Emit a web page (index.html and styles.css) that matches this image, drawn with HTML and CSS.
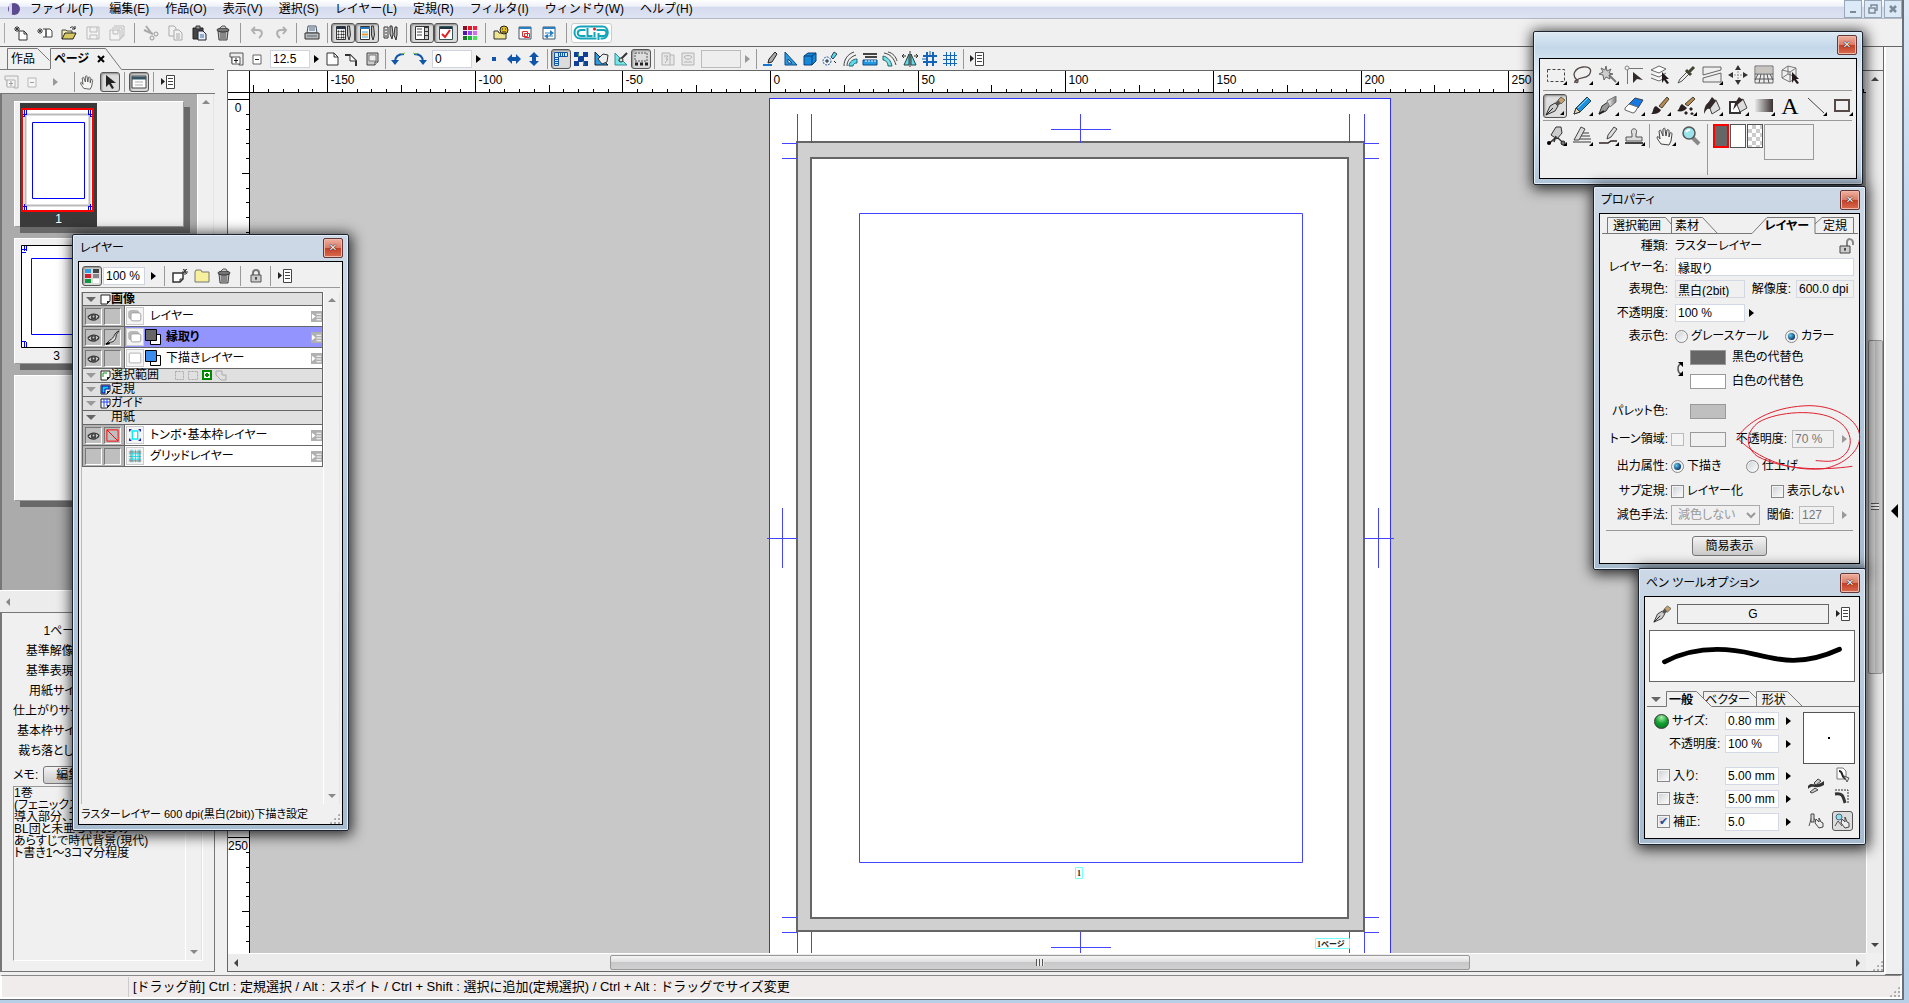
FILE: index.html
```html
<!DOCTYPE html>
<html lang="ja">
<head>
<meta charset="utf-8">
<title>ページ</title>
<link rel="stylesheet" href="styles.css">
</head>
<body>
<svg class="defs" aria-hidden="true">
<defs>
<linearGradient id="gm" x1="0" x2="1"><stop offset="0" stop-color="#fff"/><stop offset="1" stop-color="#777"/></linearGradient>
<linearGradient id="gd" x1="0" x2="1"><stop offset="0" stop-color="#e8e8e8"/><stop offset="1" stop-color="#3a3030"/></linearGradient>
<symbol id="new" viewBox="0 0 16 16"><path d="M6 6h5l3 3v6H6z" fill="#fff" stroke="#333"/><path d="M11 6v3h3M2 2l4 4M4 1v6M1 4h6M6 2L2 6" stroke="#333" fill="none"/></symbol>
<symbol id="newp" viewBox="0 0 16 16"><path d="M6 4h3v8H6M9 4h4l2 2v6H9z" fill="#fff" stroke="#444"/><path d="M1 4l4 4M3 3v6M0 6h6M5 4L1 8" stroke="#444" fill="none"/></symbol>
<symbol id="open" viewBox="0 0 16 16"><path d="M1 14V5h4l1 1h5v3" fill="#f4efb0" stroke="#444"/><path d="M1 14l3-6h11l-3 6z" fill="#d8c860" stroke="#222"/><path d="M9 3c2-2 4-1 5 1M14 1v3h-3" stroke="#222" fill="none"/></symbol>
<symbol id="save" viewBox="0 0 16 16"><path d="M2 2h12v12H2zM5 2v5h7V2M5 14v-4h7v4" fill="#f4f4f4" stroke="#bbb"/></symbol>
<symbol id="saves" viewBox="0 0 16 16"><path d="M5 1h10v10h-2M3 3h10v10h-2M1 5h10v10H1zM4 5v4h5V5" fill="#f4f4f4" stroke="#bbb"/></symbol>
<symbol id="cut" viewBox="0 0 16 16"><path d="M3 1l6 8M1 5l9 4" stroke="#aaa" stroke-width="2"/><circle cx="9" cy="13" r="2" fill="none" stroke="#999"/><circle cx="13" cy="9" r="2" fill="none" stroke="#999"/></symbol>
<symbol id="copy" viewBox="0 0 16 16"><path d="M2 1h5l2 2v8H2z" fill="#f2f2f2" stroke="#aaa"/><path d="M7 5h5l3 3v7H7zM9 9h4M9 11h4M9 13h4" fill="#f2f2f2" stroke="#aaa"/></symbol>
<symbol id="paste" viewBox="0 0 16 16"><path d="M2 3h10v11H2z" fill="#444" stroke="#222"/><path d="M5 1h4v3H5z" fill="#999" stroke="#333"/><path d="M7 6h5l3 3v6H7z" fill="#e8eef6" stroke="#223"/><path d="M9 10h4M9 12h4" stroke="#3c6fa8"/></symbol>
<symbol id="trash" viewBox="0 0 16 16"><path d="M3 6h10l-1 9H4z" fill="#bbb" stroke="#444"/><path d="M6 7v7M8 7v7M10 7v7" stroke="#555"/><ellipse cx="8" cy="5" rx="6" ry="2" fill="#777" stroke="#333"/><path d="M5 3l2-2h3l1 2" fill="#ccc" stroke="#555"/></symbol>
<symbol id="undo" viewBox="0 0 16 16"><path d="M3 5h6c5 0 5 5 1 8M6 2L3 5l3 4" fill="none" stroke="#b0b0b0" stroke-width="2"/></symbol>
<symbol id="redo" viewBox="0 0 16 16"><path d="M13 5H8c-5 0-5 5-1 8M10 2l3 3-3 4" fill="none" stroke="#b0b0b0" stroke-width="2"/></symbol>
<symbol id="print" viewBox="0 0 16 16"><path d="M4 1h8l1 7H3z" fill="#e8f0f8" stroke="#456"/><path d="M1 8h14v6H1z" fill="#bbb" stroke="#333"/><path d="M5 3h6M5 5h6M3 11h10" stroke="#567"/></symbol>
<symbol id="pal" viewBox="0 0 16 16"><path d="M1.500 1.500h9v13h-9z" fill="#eee" stroke="#333"/><path d="M1 3h10" stroke="#234" stroke-width="2"/><path d="M3 6h1v1H3zM6 6h1v1H6zM8 6h1v1H8zM3 9h1v1H3zM6 9h1v1H6zM8 9h1v1H8zM3 12h1v1H3zM6 12h1v1H6zM8 12h1v1H8z" stroke="#333"/><path d="M12.500 1v9l1.500 5 1.500-5-1-9z" fill="#bbb" stroke="#333"/></symbol>
<symbol id="pal2" viewBox="0 0 16 16"><path d="M1.500 1.500h9v13h-9z" fill="#fff" stroke="#333"/><path d="M1 3h10" stroke="#2874b8" stroke-width="2"/><path d="M3 7h6M3 12h6" stroke="#49a4dc"/><path d="M3 9.500h6" stroke="#e49a2c" stroke-width="2"/><path d="M12.500 1v9l1.500 5 1.500-5-1-9z" fill="#bbb" stroke="#333"/></symbol>
<symbol id="brushes" viewBox="0 0 16 16"><path d="M1 2h4v11H1z" fill="#eee" stroke="#333"/><path d="M2 5h2M2 8h2M2 11h2" stroke="#333"/><path d="M7 1h2l1 8-1 5-2-5zM12 2h2v8l-1 5-2-5z" fill="#bbb" stroke="#333"/></symbol>
<symbol id="film" viewBox="0 0 16 16"><path d="M1.500 1.500h9v13h-9z" fill="#fff" stroke="#333"/><path d="M10 1h5v14h-5z" fill="#333"/><path d="M3 4h5M3 7h5M3 10h5" stroke="#444"/><path d="M11 3h3v3h-3zM11 7h3v3h-3zM11 11h3v3h-3z" fill="#ccc"/></symbol>
<symbol id="check" viewBox="0 0 16 16"><path d="M1.500 1.500h13v13h-13z" fill="#fff" stroke="#355"/><path d="M2 3h12" stroke="#234" stroke-width="2"/><path d="M4 9l3 3 5-7" fill="none" stroke="#e02020" stroke-width="2"/></symbol>
<symbol id="colors" viewBox="0 0 16 16"><path d="M1 1h4v4H1z" fill="#900c20"/><path d="M6 1h4v4H6z" fill="#e01828"/><path d="M11 1h4v4h-4z" fill="#f02040"/><path d="M1 6h4v4H1z" fill="#5018b0"/><path d="M6 6h4v4H6z" fill="#9848e0"/><path d="M11 6h4v4h-4z" fill="#d070f0"/><path d="M1 11h4v4H1z" fill="#187828"/><path d="M6 11h4v4H6z" fill="#18b838"/><path d="M11 11h4v4h-4z" fill="#50e060"/></symbol>
<symbol id="mat" viewBox="0 0 16 16"><path d="M1 14V6h4l1 2h7v6z" fill="#efe490" stroke="#333"/><circle cx="11" cy="5" r="4" fill="#e6c020" stroke="#222"/><path d="M9 4h1M12 4h1M9 7h4" stroke="#222"/></symbol>
<symbol id="winr" viewBox="0 0 16 16"><path d="M2 2h12v12H2z" fill="#fff" stroke="#456"/><path d="M2 3h12" stroke="#2880c0" stroke-width="2"/><path d="M5.500 6.500h5v5h-5zM7.500 8.500h5v4h-5z" fill="#fff" stroke="#d83030"/></symbol>
<symbol id="winb" viewBox="0 0 16 16"><path d="M2 2h12v12H2z" fill="#fff" stroke="#456"/><path d="M2 3h12" stroke="#2880c0" stroke-width="2"/><path d="M4 8h6M6 11h6" stroke="#2880c0"/><path d="M9 5l4 3-4 3zM7 9l-4 2 4 3z" fill="#2880c0"/></symbol>
<symbol id="plus" viewBox="0 0 16 16"><path d="M1 2h13v12h-4v-2H3V6H1z" fill="#eee" stroke="#555"/><path d="M3 6h8v7H3z" fill="#fff" stroke="#555"/><path d="M5 9.500h4M7 7v5" stroke="#222"/></symbol>
<symbol id="minus" viewBox="0 0 16 16"><path d="M4 4h8v9H4z" fill="#fff" stroke="#666"/><path d="M6 8.500h4" stroke="#222"/></symbol>
<symbol id="page" viewBox="0 0 16 16"><path d="M3 2h7l4 4v8H3z" fill="#fff" stroke="#333"/><path d="M10 2v4h4" fill="none" stroke="#333"/></symbol>
<symbol id="corner" viewBox="0 0 16 16"><path d="M1 4h5l6 6v5" fill="none" stroke="#333" stroke-width="2"/><path d="M6 4v6h6" fill="#fff" stroke="#333"/></symbol>
<symbol id="roll" viewBox="0 0 16 16"><path d="M3 2h11v9l-3 3H3z" fill="#ccc" stroke="#444"/><path d="M5 4h7v6H5z" fill="#eee" stroke="#777"/><path d="M14 11h-3v3" fill="#fff" stroke="#444"/></symbol>
<symbol id="rotl" viewBox="0 0 16 16"><path d="M13 3C7 3 4 6 4 11" fill="none" stroke="#0f55a8" stroke-width="2"/><path d="M0 9h8l-4 5z" fill="#0f55a8"/><path d="M14 2l-4 1" stroke="#7fd040"/></symbol>
<symbol id="rotr" viewBox="0 0 16 16"><path d="M3 3c6 0 9 3 9 8" fill="none" stroke="#0f55a8" stroke-width="2"/><path d="M16 9H8l4 5z" fill="#0f55a8"/><path d="M2 2l4 1" stroke="#7fd040"/></symbol>
<symbol id="dot" viewBox="0 0 16 16"><path d="M6 6h4v4H6z" fill="#0f55a8"/></symbol>
<symbol id="fliph" viewBox="0 0 16 16"><path d="M1 8l5-5v3h4V3l5 5-5 5v-3H6v3z" fill="#0f55a8"/></symbol>
<symbol id="flipv" viewBox="0 0 16 16"><path d="M8 1l5 5h-3v4h3l-5 5-5-5h3V6H3z" fill="#0f55a8"/></symbol>
<symbol id="rul" viewBox="0 0 16 16"><path d="M1.500 1.500h13v4h-9v9h-4z" fill="#d4e8f8" stroke="#0f55a8"/><path d="M5.500 1v4M7.500 1v4M9.500 1v4M11.500 1v4M1 6.500h4M1 8.500h4M1 10.500h4M1 12.500h4" stroke="#0f55a8"/></symbol>
<symbol id="chk" viewBox="0 0 16 16"><path d="M1 1h5v5H1zM10 1h5v5h-5zM5 5h6v6H5zM1 10h5v5H1zM10 10h5v5h-5z" fill="#0f3f98"/><path d="M5 2l1 4M10 10l1 4" stroke="#55b848"/></symbol>
<symbol id="trih" viewBox="0 0 16 16"><path d="M2 1v13h13z" fill="#2f9be0" stroke="#123"/><path d="M5 8l5-5 5 1-1 7-5 2z" fill="#eee" stroke="#333"/></symbol>
<symbol id="trip" viewBox="0 0 16 16"><path d="M2 2v12h12z" fill="#70e8e8" stroke="#489"/><path d="M6 10l8-8" stroke="#333" stroke-width="2"/><circle cx="8" cy="9" r="2" fill="#ddd" stroke="#333"/></symbol>
<symbol id="seld" viewBox="0 0 16 16"><path d="M2 2h12v8H2z" fill="#ddd" stroke="#555" stroke-dasharray="2 1"/><path d="M2 13h3M7 13h3M12 13h3" stroke="#222" stroke-width="3"/></symbol>
<symbol id="g1" viewBox="0 0 16 16"><path d="M2 2h8v12H2zM10 4h4v10h-4M4 5h4l-2 3h2l-3 4" fill="#e8e8e8" stroke="#b4b4b4"/></symbol>
<symbol id="g2" viewBox="0 0 16 16"><path d="M2 2h12v12H2zM4 6c2-2 6-2 8 0-2 3-6 3-8 0M4 11h8" fill="#e8e8e8" stroke="#b4b4b4"/></symbol>
<symbol id="penr" viewBox="0 0 16 16"><path d="M1 14h9" stroke="#1278d0" stroke-width="2"/><path d="M6 12l1-4 6-7 2 2-5 8z" fill="#aaa" stroke="#222"/></symbol>
<symbol id="tri" viewBox="0 0 16 16"><path d="M3 1v13h12zM6 8v4h4z" fill="#2f9be0" stroke="#0a4a88" fill-rule="evenodd"/></symbol>
<symbol id="cube" viewBox="0 0 16 16"><path d="M2 5l4-3h8v8l-4 4H2z" fill="#1688d8" stroke="#0a3f78"/><path d="M2 5h8v9M10 5l4-3" fill="none" stroke="#0a3f78"/></symbol>
<symbol id="spec" viewBox="0 0 16 16"><circle cx="5" cy="10" r="4" fill="#e8f4fa" stroke="#2a5a90" stroke-dasharray="2 1"/><path d="M3 10h4M5 8v4" stroke="#222"/><path d="M9 6l3-5 3 2-4 5z" fill="#52d8e8" stroke="#345"/><path d="M12 10l2 2" stroke="#222"/></symbol>
<symbol id="curv" viewBox="0 0 16 16"><path d="M2 15C2 8 6 3 12 1M5 15c0-5 3-9 9-11" fill="none" stroke="#444"/><path d="M7 15c0-4 4-7 8-7v4c-2 0-4 1-4 3z" fill="#5cd8e8" stroke="#267"/></symbol>
<symbol id="para" viewBox="0 0 16 16"><path d="M1 3h14M3 6h12" stroke="#444" stroke-width="2"/><path d="M1 9h14v5H1z" fill="#2498e0" stroke="#0a4a88"/><path d="M4 9v2M7 9v2M10 9v2M13 9v2" stroke="#fff"/></symbol>
<symbol id="conc" viewBox="0 0 16 16"><path d="M2 2c6 1 10 5 12 12M6 1c5 1 8 5 9 9" fill="none" stroke="#444"/><path d="M1 5c5 1 8 5 9 10H6C6 12 4 9 1 9z" fill="#7ce0ec" stroke="#266"/></symbol>
<symbol id="sym" viewBox="0 0 16 16"><path d="M7 3v11H2zM9 3v11h5z" fill="#68d8e8" stroke="#244"/><path d="M8 0v16M0 5h4M12 5h4M2 3L0 5l2 2M14 3l2 2-2 2" stroke="#333" fill="none"/></symbol>
<symbol id="guide" viewBox="0 0 16 16"><path d="M1 5h14M1 11h14M5 1v14M11 1v14" stroke="#1464b8" stroke-width="2"/><path d="M0 8h5M8 0v5" stroke="#1464b8"/></symbol>
<symbol id="grid" viewBox="0 0 16 16"><path d="M1 4.500h14M1 8.500h14M1 12.500h14M4.500 1v14M8.500 1v14M12.500 1v14" stroke="#1464b8"/></symbol>
<symbol id="menu" viewBox="0 0 16 16"><path d="M1 4v7l4-3.500z" fill="#222"/><path d="M6.500 1.500h8v13h-8z" fill="#fff" stroke="#444"/><path d="M8 4.500h5M8 7.500h5M8 10.500h5" stroke="#444"/></symbol>
<symbol id="hand" viewBox="0 0 20 20"><path d="M6 18c-2-3-4-5-4-7 1-1 2 0 3 2L4 5c1-1 2-1 2 0l2 5V3c1-1 2-1 2 0l1 7 1-6c1-1 2 0 2 1v6l1-4c1-1 2 0 2 1l-1 7-2 4z" fill="#f6f6f4" stroke="#444"/></symbol>
<symbol id="cur" viewBox="0 0 16 16"><path d="M4 1v12l3-3 3 5 2-1-3-5h5z" fill="#222"/></symbol>
<symbol id="win" viewBox="0 0 16 16"><path d="M1 2h14v12H1z" fill="#fff" stroke="#444"/><path d="M1 4h14" stroke="#356" stroke-width="3"/><path d="M4 8h8M4 11h8" stroke="#aaa"/></symbol>
<symbol id="clr" viewBox="0 0 16 16"><path d="M1 1h6v4H1z" fill="#30a0e0"/><path d="M9 1h6v4H9z" fill="#444"/><path d="M1 6h6v4H1z" fill="#d02030"/><path d="M9 6h6v4H9z" fill="#888"/><path d="M1 11h6v4H1z" fill="#109840"/><path d="M9 11h6v4H9z" fill="#fff"/></symbol>
<symbol id="nlay" viewBox="0 0 16 16"><path d="M1 5h10v6l-3 3H1z" fill="#fff" stroke="#333" stroke-width="1.500"/><path d="M11 11H8v3M11 5l4-4M13 1v6M10 4h6M11 1l4 5" fill="none" stroke="#333"/></symbol>
<symbol id="fold" viewBox="0 0 16 16"><path d="M1 4l1-2h5l1 2h7v10H1z" fill="#f6f09c" stroke="#777"/></symbol>
<symbol id="lock" viewBox="0 0 16 16"><path d="M5 8V5c0-4 6-4 6 0v3" fill="none" stroke="#777" stroke-width="2"/><path d="M3 7h10v7H3z" fill="#ccc" stroke="#555"/><path d="M8 9v3M7 10h2" stroke="#222"/></symbol>
<symbol id="unlock" viewBox="0 0 16 16"><path d="M9 8V4c0-4 6-4 6 1v2" fill="none" stroke="#888" stroke-width="2"/><path d="M2 8h10v7H2z" fill="#ccc" stroke="#444"/><path d="M7 10v3M6 11h2" stroke="#222"/></symbol>
<symbol id="eye" viewBox="0 0 16 16"><path d="M2 9c2-4 9-5 12-1M2 9c3 4 9 4 12-1" fill="#eee" stroke="#333" stroke-width="1.500"/><circle cx="8" cy="8.500" r="3" fill="#444"/><circle cx="8" cy="8" r="1" fill="#ccc"/></symbol>
<symbol id="quill" viewBox="0 0 16 16"><path d="M1 15l5-2c4 0 6-4 6-8l3-4C9 3 11 8 5 11z" fill="#ddd" stroke="#222"/><path d="M1 15l4-1" stroke="#000" stroke-width="2"/></symbol>
<symbol id="lay" viewBox="0 0 18 18"><rect x="2" y="3" width="11" height="9" rx="2" fill="#bbb" stroke="#aaa"/><rect x="4.500" y="5.500" width="11" height="9" rx="2" fill="#fff" stroke="#999"/></symbol>
<symbol id="lay1" viewBox="0 0 18 18"><rect x="2.500" y="3.500" width="13" height="11" rx="1" fill="#fff" stroke="#aaa"/></symbol>
<symbol id="tombo" viewBox="0 0 18 18"><path d="M6 4.500h6v9H6z" fill="#fff" stroke="#00f0f0" stroke-width="1.500"/><path d="M3 5V3h2M13 3h2v2M3 13v2h2M13 15h2v-2" fill="none" stroke="#2020c0" stroke-width="1.500"/></symbol>
<symbol id="gridl" viewBox="0 0 18 18"><path d="M2 6.500h14M2 9.500h14M2 12.500h14M6.500 2v14M9.500 2v14M12.500 2v14" stroke="#10d8e0"/><path d="M2 4.500h14M2 14.500h14M4.500 2v14M14.500 2v14" stroke="#777"/></symbol>
<symbol id="opts" viewBox="0 0 12 12"><path d="M0 0h12v12H0z" fill="#b0b0b0"/><path d="M1 3v6l4-3zM6 3h5v1H6zM6 6h5v1H6zM6 9h5v1H6z" fill="#fff"/></symbol>
<symbol id="sheet" viewBox="0 0 11 11"><path d="M1 1h9v6l-3 3H1z" fill="#fff" stroke="#222"/><path d="M10 7H7v3z" fill="#222"/></symbol>
<symbol id="marq" viewBox="0 0 20 20"><path d="M1.500 4.500h17v12h-17z" fill="none" stroke="#444" stroke-dasharray="3 2"/></symbol>
<symbol id="lasso" viewBox="0 0 20 20"><path d="M5 15C-1 10 3 3 11 2c8-1 9 4 6 8-4 4-9 2-12 5-3 2 1 4 1 1 0-2-4-1-3 2" fill="none" stroke="#554a48" stroke-width="1.300"/></symbol>
<symbol id="wand" viewBox="0 0 20 20"><path d="M10 9l8 8" stroke="#777" stroke-width="2"/><path d="M8 1l1 5 4-2-2 4 4 1-4 1 1 4-4-2-2 3-1-5-4-1 4-2-2-4 4 2z" fill="#ccc" stroke="#666"/></symbol>
<symbol id="shp" viewBox="0 0 20 20"><path d="M3.500 19V3.500H19" fill="none" stroke="#777"/><circle cx="3" cy="3" r="2" fill="#eee" stroke="#888"/><path d="M9 7v11l4-4 6 1z" fill="#332a2a"/></symbol>
<symbol id="lays" viewBox="0 0 20 20"><path d="M1 5l8-4 7 3-7 4zM1 9l8 3 7-4M1 13l8 3 4-2" fill="#fff" stroke="#666"/><path d="M12 7v11l2-3 3 4 2-1-3-4h3z" fill="#221a1a"/></symbol>
<symbol id="eyed" viewBox="0 0 20 20"><path d="M2 18l2-4 8-8 2 2-8 8z" fill="#eee" stroke="#555"/><path d="M10 5l5 5M13 7l5-5" stroke="#443" stroke-width="3"/></symbol>
<symbol id="slice" viewBox="0 0 20 20"><path d="M1 2h18v3L1 10zM1 17V13l18-5v9z" fill="#eee" stroke="#666"/></symbol>
<symbol id="move" viewBox="0 0 20 20"><path d="M10 0l3 5H7zM10 20l3-5H7zM0 10l5-3v6zM20 10l-5-3v6z" fill="#333"/><path d="M10 6v8M6 10h8" stroke="#999" stroke-dasharray="2 1"/></symbol>
<symbol id="persp" viewBox="0 0 20 20"><path d="M1 1h18v17H1z" fill="#eee" stroke="#666"/><path d="M1 9h18M1 14h18M7 9L5 18M10 9v9M13 9l2 9M4 9l-3 6M16 9l3 6" stroke="#555" fill="none"/><path d="M2 2h16v6H2z" fill="#c8c4c0"/></symbol>
<symbol id="cubec" viewBox="0 0 20 20"><path d="M2 5l6-4 8 2v9l-6 5-8-4zM2 5l8 2 6-4M10 7v10M2 13l6-4 8 3M8 1v8" fill="none" stroke="#777"/><path d="M12 7v11l2-3 3 4 2-1-3-4h3z" fill="#221a1a"/></symbol>
<symbol id="pen" viewBox="0 0 20 20"><path d="M1 19l4-9 5-3 3 3-3 5z" fill="#ccc" stroke="#333"/><path d="M1 19l7-7" stroke="#222"/><path d="M10 7l3-3 3 3-3 3z" fill="#555"/><path d="M13 4l3-3 4 3-4 4z" fill="#c8a070" stroke="#665"/></symbol>
<symbol id="pencil" viewBox="0 0 20 20"><path d="M2 18l2-6L15 1l4 4L8 16z" fill="#1f8fe0" stroke="#244"/><path d="M2 18l2-6 4 4z" fill="#f0d8b0" stroke="#333"/><path d="M6 12L16 2" stroke="#8ad0ff"/></symbol>
<symbol id="mark" viewBox="0 0 20 20"><path d="M1 18l3-8 6-4 2 3-4 6z" fill="#999" stroke="#333"/><path d="M9 5l9-5v6l-6 5z" fill="url(#gm)" stroke="#777"/><path d="M1 18l5-3" stroke="#222" stroke-width="2"/></symbol>
<symbol id="erase" viewBox="0 0 20 20"><path d="M5 8l6-6 8 2-5 8z" fill="#1878e0" stroke="#345"/><path d="M1 12l4-4 9 3-3 5-2 1-8-3z" fill="#fff" stroke="#666"/></symbol>
<symbol id="brush" viewBox="0 0 20 20"><path d="M9 10l8-9 2 2-7 9z" fill="#b88850" stroke="#443"/><path d="M1 18c3-2 1-6 5-8l5 4c-2 4-6 4-10 4z" fill="#2a2020"/></symbol>
<symbol id="pbrush" viewBox="0 0 20 20"><path d="M9 8l8-7 2 2-7 7z" fill="#b88850" stroke="#443"/><path d="M1 15c3-2 2-5 5-7l5 4c-2 3-6 4-10 3z" fill="#2a2020"/><path d="M8 17l2-2 2 2-2 2zM13 13l2-2 2 2-2 2zM14 18l2-2 2 2-2 1z" fill="#2a2020"/></symbol>
<symbol id="fill" viewBox="0 0 20 20"><path d="M6 7l8-3 4 9-8 5z" fill="#ddd" stroke="#444"/><path d="M14 5L10 1 6 7c-3 2-4 6-4 11 2-4 3-6 6-5z" fill="#332828"/></symbol>
<symbol id="fill2" viewBox="0 0 20 20"><path d="M2 6h10v11H2z" fill="#fff" stroke="#333" stroke-width="2"/><path d="M8 6l7-3 4 9-7 4z" fill="#ddd" stroke="#444"/><path d="M15 4l-4-3-4 6-2 7 4-5z" fill="#332828"/></symbol>
<symbol id="grad" viewBox="0 0 20 20"><path d="M1 3h18v13H1z" fill="url(#gd)"/></symbol>
<symbol id="line" viewBox="0 0 20 20"><path d="M2 2l16 15" stroke="#444"/></symbol>
<symbol id="rect" viewBox="0 0 20 20"><path d="M3 4h14v11H3z" fill="none" stroke="#554a48" stroke-width="2"/></symbol>
<symbol id="join" viewBox="0 0 20 20"><path d="M5 9l5-8h5l1 6-5 6z" fill="#ccc" stroke="#333"/><path d="M2 17c4 0 4-4 8-5s5 5 8 5M10 10l-2 6" stroke="#333" stroke-width="1.500" fill="none"/><circle cx="3" cy="17" r="2"/><circle cx="17" cy="17" r="2" fill="#777" stroke="#222"/></symbol>
<symbol id="plines" viewBox="0 0 20 20"><path d="M8 7h9M7 10h11M3 13h16M1 16h18" stroke="#777" stroke-width="1.500"/><path d="M2 14L9 1l4 2-6 11z" fill="#ddd" stroke="#444"/></symbol>
<symbol id="pline" viewBox="0 0 20 20"><path d="M9 13l1-4 6-8 3 2-6 8z" fill="#ddd" stroke="#444"/><path d="M1 17h9l3-2h6" stroke="#322" fill="none" stroke-width="1.500"/></symbol>
<symbol id="stamp" viewBox="0 0 20 20"><path d="M8 8C5 1 15 1 12 8v3h6v4H2v-4h6z" fill="#ddd" stroke="#555"/><path d="M1 17h18" stroke="#444" stroke-width="2"/></symbol>
<symbol id="zoomi" viewBox="0 0 20 20"><path d="M11 11l7 7" stroke="#888" stroke-width="4"/><circle cx="8" cy="7" r="6" fill="#9ce4ec" stroke="#555" stroke-width="1.500"/><path d="M5 6c1-2 2-2 4-2" stroke="#fff" stroke-width="2" fill="none"/></symbol>
<symbol id="swap" viewBox="0 0 10 16"><path d="M6 3C2 4 2 11 6 13" fill="none" stroke="#555" stroke-width="1.500"/><path d="M3 1h5v5zM8 10v5H3z"/></symbol>
<symbol id="press" viewBox="0 0 16 16"><path d="M0 8c4-5 6 2 16-5v4C8 12 5 6 0 11z" fill="#333"/><path d="M6 5l4-4 3 2-5 4zM2 14l5-4 3 2-6 3z" fill="#ccc" stroke="#444"/></symbol>
<symbol id="pcur" viewBox="0 0 16 16"><path d="M3 1h6l3 3v8H3z" fill="#fff" stroke="#777"/><path d="M5 4c5 0 1 7 8 8" fill="none" stroke="#222" stroke-width="2"/><path d="M10 9l5 2-2 4z" fill="#ddd" stroke="#555"/></symbol>
<symbol id="bend" viewBox="0 0 16 16"><path d="M1 5c8-1 8 2 10 9" fill="none" stroke="#333" stroke-width="3"/><path d="M1 1h13v13" fill="none" stroke="#333" stroke-dasharray="2 1"/></symbol>
<symbol id="stab" viewBox="0 0 16 16"><path d="M1 13L4 3l7 9" fill="none" stroke="#555"/><path d="M3 1h3v8H3z" fill="#ddd" stroke="#444"/><path d="M8 6l3 3V5l2 4 2 1v4l-4 1-4-5z" fill="#eee" stroke="#444"/></symbol>
<symbol id="stabz" viewBox="0 0 16 16"><circle cx="5" cy="4" r="3" fill="#8ee0ec" stroke="#567"/><path d="M1 13l3-5 4 5" fill="none" stroke="#555"/><path d="M8 6l3 3V4l2 5 2 1v4l-4 1-4-5z" fill="#eee" stroke="#444"/></symbol>
</defs>
</svg>

<div class="frame">
<div class="app">
  <header class="menubar">
    <svg class="appicon" viewBox="0 0 16 16" aria-hidden="true"><circle cx="8" cy="8" r="6" fill="#5b4a90"/><path d="M5 2.500v11M4 3v10" stroke="#d8d4f0" stroke-width="2"/></svg>
    <nav class="menus">
      <button>ファイル(F)</button><button>編集(E)</button><button>作品(O)</button><button>表示(V)</button><button>選択(S)</button><button>レイヤー(L)</button><button>定規(R)</button><button>フィルタ(I)</button><button>ウィンドウ(W)</button><button>ヘルプ(H)</button>
    </nav>
    <div class="winbtns">
      <button aria-label="最小化"><svg viewBox="0 0 16 16"><path d="M5 11h6" stroke="#7c8a98" stroke-width="2"/></svg></button>
      <button aria-label="元に戻す"><svg viewBox="0 0 16 16"><path d="M6 6V4h6v5h-2M4 7h6v5H4z" fill="none" stroke="#7c8a98" stroke-width="1.500"/></svg></button>
      <button aria-label="閉じる"><svg viewBox="0 0 16 16"><path d="M5 5l6 6M11 5l-6 6" stroke="#7c8a98" stroke-width="2.500"/></svg></button>
    </div>
  </header>

  <div class="toolbar main">
    <button class="tb"><svg><use href="#new"/></svg></button><button class="tb"><svg><use href="#newp"/></svg></button><button class="tb"><svg><use href="#open"/></svg></button><button class="tb"><svg><use href="#save"/></svg></button><button class="tb"><svg><use href="#saves"/></svg></button>
    <i class="sep wide"></i>
    <button class="tb"><svg><use href="#cut"/></svg></button><button class="tb"><svg><use href="#copy"/></svg></button><button class="tb"><svg><use href="#paste"/></svg></button><button class="tb"><svg><use href="#trash"/></svg></button>
    <i class="sep wide"></i>
    <button class="tb"><svg><use href="#undo"/></svg></button><button class="tb"><svg><use href="#redo"/></svg></button>
    <i class="sep"></i>
    <button class="tb"><svg><use href="#print"/></svg></button>
    <i class="sep"></i>
    <button class="tb on"><svg><use href="#pal"/></svg></button><button class="tb on"><svg><use href="#pal2"/></svg></button><button class="tb"><svg><use href="#brushes"/></svg></button>
    <i class="sep"></i>
    <button class="tb on"><svg><use href="#film"/></svg></button><button class="tb on"><svg><use href="#check"/></svg></button><button class="tb"><svg><use href="#colors"/></svg></button>
    <i class="sep"></i>
    <button class="tb"><svg><use href="#mat"/></svg></button><button class="tb"><svg><use href="#winr"/></svg></button><button class="tb"><svg><use href="#winb"/></svg></button>
    <i class="sep wide"></i>
    <button class="clip" aria-label="CLIP"><svg viewBox="0 0 36 16"><g fill="none" stroke="#12a4b8" stroke-width="2"><path d="M12 5H8c-5 0-5 6 0 6h4M14 3v8h5M21 7v5M25 15V8M23 5h7c4 0 4 6 0 6h-5"/></g><path d="M7 1.500h22c7 0 7 12 0 12h-2M23 13.500H7c-8 0-8-12 0-12" fill="none" stroke="#12a4b8" stroke-width="2"/><circle cx="21" cy="4" r="1.500" fill="#e02020"/></svg></button>
  </div>

  <div class="workspace">
    <aside class="side">
      <div class="sidetabs">
        <svg class="tabline" aria-hidden="true"><path d="M7.500 22V1.500h30l12 12M50.500 22V1.500h55l16 21H214M0 22.500h50" fill="none" stroke="#777"/></svg>
        <button>作品</button><button class="cur">ページ</button><button class="x" aria-label="タブを閉じる"><svg viewBox="0 0 8 8"><path d="M1 1l6 6M7 1L1 7" stroke="#000" stroke-width="2"/></svg></button>
      </div>
      <div class="toolbar sub">
        <button class="tb dim"><svg><use href="#plus"/></svg></button><button class="tb dim"><svg><use href="#minus"/></svg></button><button class="arr gray spaced"></button>
        <i class="sep wide"></i>
        <button class="tb hand"><svg><use href="#hand"/></svg></button><button class="tb on"><svg><use href="#cur"/></svg></button>
        <i class="sep wide"></i>
        <button class="tb on"><svg><use href="#win"/></svg></button>
        <i class="sep wide"></i>
        <button class="tb"><svg><use href="#menu"/></svg></button>
      </div>
      <div class="listwrap">
        <div class="pages">
          <div class="spread">
            <div class="leaf sel"><svg viewBox="0 0 73 104"><path d="M0 0h73v104H0z" fill="#fff"/><path d="M4.500 6.500h64v91h-64z" fill="none" stroke="#bbb" stroke-width="2"/><path d="M11.500 14.500h52v76h-52z" fill="#fff" stroke="#00f"/><path d="M3.500 1v7M5.500 1v5M1 6.500h5M1 8.500h3M69.500 1v7M67.500 1v5M67 6.500h5M69 8.500h3M3.500 103v-7M5.500 103v-5M1 98.500h5M69.500 103v-7M67.500 103v-5M67 98.500h5" stroke="#00f"/><path d="M1 1h71v102H1z" fill="none" stroke="#f00" stroke-width="2"/></svg><span>1</span></div>
          </div>
          <div class="spread">
            <div class="leaf wide"><svg viewBox="0 0 140 104"><path d="M.5.5h139v102H.5z" fill="#fff" stroke="#000"/><path d="M10.500 13.500h120v76h-120z" fill="none" stroke="#00f"/><path d="M3.500 1v5M5.500 1v5M1 4.500h4M1 7.500h4M3.500 102v-5M5.500 102v-5M1 96.500h4" stroke="#00f"/></svg><span>3</span></div>
          </div>
          <div class="spread"></div>
        </div>
        <div class="vbar flat"><button class="up"></button></div>
      </div>
      <div class="hbar flat"><button class="left"></button></div>
      <div class="info">
        <dl>
          <dt>1ページ:</dt><dt>基準解像度:</dt><dt>基準表現色:</dt><dt>用紙サイズ:</dt><dt>仕上がりサイズ:</dt><dt>基本枠サイズ:</dt><dt>裁ち落とし幅:</dt>
        </dl>
        <div class="memohead"><label for="memo">メモ:</label><button class="push">編集</button></div>
        <div class="memo">
          <textarea id="memo" readonly>1巻
(フェニックス・
導入部分、コマ
BL団と未亜ちゃんのみ
あらすじで時代背景(現代)
ト書き1～3コマ分程度</textarea>
          <div class="vbar flat"><button class="down"></button></div>
        </div>
      </div>
    </aside>

    <main class="doc">
      <div class="toolbar view">
        <button class="tb"><svg><use href="#plus"/></svg></button><button class="tb"><svg><use href="#minus"/></svg></button>
        <input class="num" value="12.5" aria-label="倍率"><button class="arr"></button>
        <button class="tb"><svg><use href="#page"/></svg></button><button class="tb"><svg><use href="#corner"/></svg></button><button class="tb"><svg><use href="#roll"/></svg></button>
        <i class="sep"></i>
        <button class="tb"><svg><use href="#rotl"/></svg></button><button class="tb"><svg><use href="#rotr"/></svg></button>
        <input class="num" value="0" aria-label="回転"><button class="arr"></button>
        <button class="tb"><svg><use href="#dot"/></svg></button><button class="tb"><svg><use href="#fliph"/></svg></button><button class="tb"><svg><use href="#flipv"/></svg></button>
        <i class="sep"></i>
        <button class="tb on"><svg><use href="#rul"/></svg></button><button class="tb"><svg><use href="#chk"/></svg></button><button class="tb"><svg><use href="#trih"/></svg></button><button class="tb"><svg><use href="#trip"/></svg></button><button class="tb on"><svg><use href="#seld"/></svg></button>
        <i class="sep"></i>
        <button class="tb"><svg><use href="#g1"/></svg></button><button class="tb"><svg><use href="#g2"/></svg></button>
        <input class="num" disabled aria-label="値"><button class="arr gray"></button>
        <i class="sep"></i>
        <button class="tb"><svg><use href="#penr"/></svg></button><button class="tb"><svg><use href="#tri"/></svg></button><button class="tb"><svg><use href="#cube"/></svg></button><button class="tb"><svg><use href="#spec"/></svg></button><button class="tb"><svg><use href="#curv"/></svg></button><button class="tb"><svg><use href="#para"/></svg></button><button class="tb"><svg><use href="#conc"/></svg></button><button class="tb"><svg><use href="#sym"/></svg></button><button class="tb"><svg><use href="#guide"/></svg></button><button class="tb"><svg><use href="#grid"/></svg></button>
        <i class="sep"></i>
        <button class="tb"><svg><use href="#menu"/></svg></button>
      </div>
      <div class="view-grid">
        <div class="corner"></div>
        <svg class="hruler" id="hruler"></svg>
        <svg class="vruler" id="vruler"></svg>
        <div class="canvas">
          <svg class="paper">
            <g transform="translate(519 5)" fill="none">
              <rect x=".5" y=".5" width="621" height="960" fill="#fff" stroke="#33f"/>
              <path fill="#d0d0d0" fill-rule="evenodd" stroke="#666" stroke-width="2" d="M28 44h567v789H28zM42 60h537v760H42z"/>
              <path stroke="#44f" d="M90.500 115.500h443v649h-443z
                M28.500 16v29M42.500 16v29M13 45.500h15M13 60.500h15
                M580.500 16v29M595.500 16v29M595 45.500h15M595 60.500h15
                M28.500 834v60M42.500 834v60M13 819.500h15M13 834.500h15
                M580.500 834v60M595.500 834v60M595 819.500h15M595 834.500h15
                M311.500 16v29M282 31.500h60M311.500 834v60M282 849.500h60
                M13.500 410v60M-2 440.500h30M609.500 410v60M595 440.500h30"/>
              <path stroke="#7ff" d="M306.500 769.500h7v11h-7zM546.500 840.500h34v10h-34z"/>
              <text x="308" y="778" class="pg">1</text>
              <text x="548" y="849" class="pg">1ページ</text>
            </g>
          </svg>
        </div>
        <div class="vbar"><button class="up"></button><div class="thumb"></div><button class="down"></button></div>
        <div class="hbar"><button class="left"></button><div class="track"></div><div class="thumb"></div><div class="track end"></div><button class="right"></button></div>
        <div class="grip"></div>
      </div>
    </main>
    <div class="dock"><button aria-label="パレットを開く"></button></div>
  </div>

  <footer class="status"><span>[ドラッグ前] Ctrl : 定規選択 / Alt : スポイト / Ctrl + Shift : 選択に追加(定規選択) / Ctrl + Alt : ドラッグでサイズ変更</span><div class="grip"></div></footer>
</div>
</div>

<section class="palette layers">
  <header><h2>レイヤー</h2><button class="close" aria-label="閉じる"></button></header>
  <div class="client">
    <div class="toolbar lt">
      <button class="tb on"><svg><use href="#clr"/></svg></button><input class="num" value="100 %" aria-label="不透明度"><button class="arr"></button>
      <i class="sep wide"></i>
      <button class="tb"><svg><use href="#nlay"/></svg></button><button class="tb"><svg><use href="#fold"/></svg></button><button class="tb"><svg><use href="#trash"/></svg></button>
      <i class="sep wide"></i>
      <button class="tb"><svg><use href="#lock"/></svg></button>
      <i class="sep"></i>
      <button class="tb"><svg><use href="#menu"/></svg></button>
    </div>
    <div class="layerbox">
      <ul class="layerlist">
        <li class="grp b"><i class="tri dk"></i><svg><use href="#sheet"/></svg>画像</li>
        <li class="lay"><i class="cell"><svg><use href="#eye"/></svg></i><i class="cell"></i><span class="nm"><svg class="th"><use href="#lay"/></svg><em class="pad">レイヤー</em><svg class="op"><use href="#opts"/></svg></span></li>
        <li class="lay sel"><i class="cell"><svg><use href="#eye"/></svg></i><i class="cell"><svg><use href="#quill"/></svg></i><span class="nm"><svg class="th"><use href="#lay"/></svg><svg class="sw" viewBox="0 0 17 17"><path d="M5.500 5.500h10v10h-10z" fill="#fff" stroke="#000"/><path d="M.5.5h11v11H.5z" fill="#666" stroke="#000"/></svg><em>縁取り</em><svg class="op"><use href="#opts"/></svg></span></li>
        <li class="lay"><i class="cell"><svg><use href="#eye"/></svg></i><i class="cell"></i><span class="nm"><svg class="th"><use href="#lay1"/></svg><svg class="sw" viewBox="0 0 17 17"><path d="M5.500 5.500h10v10h-10z" fill="#fff" stroke="#000"/><path d="M.5.5h11v11H.5z" fill="#3c8cf0" stroke="#000"/></svg><em>下描きレイヤー</em><svg class="op"><use href="#opts"/></svg></span></li>
        <li class="grp"><i class="tri"></i><svg viewBox="0 0 11 11"><use href="#sheet"/><path d="M3 7V3h4" fill="none" stroke="#090"/></svg>選択範囲<svg class="marks" viewBox="0 0 52 11"><g fill="none" stroke="#aaa"><path d="M.5 1.500h8v8h-8zM13.500 1.500h9v8h-9z" stroke-dasharray="2 1"/><path d="M41 1h6v4h4v5h-5l-5-5z"/></g><path d="M28 1h8v8h-8z" fill="#fff" stroke="#080" stroke-width="2"/><path d="M30 5h4M32 3v4" stroke="#080" stroke-width="2"/></svg></li>
        <li class="grp"><i class="tri"></i><svg viewBox="0 0 11 11"><use href="#sheet"/><path d="M2 9V2h7v3H5v4z" fill="#10d0f0" stroke="#00a"/></svg>定規</li>
        <li class="grp"><i class="tri"></i><svg viewBox="0 0 11 11"><use href="#sheet"/><path d="M1 4h9M4 1v8M7 1v7" stroke="#24f"/></svg>ガイド</li>
        <li class="grp"><i class="tri dk"></i><svg></svg>用紙</li>
        <li class="lay"><i class="cell"><svg><use href="#eye"/></svg></i><i class="cell"><svg viewBox="0 0 16 16"><path d="M2 2h12v12H2zM2 2l12 12" fill="none" stroke="#f00"/></svg></i><span class="nm"><svg class="th"><use href="#tombo"/></svg><em class="pad">トンボ・基本枠レイヤー</em><svg class="op"><use href="#opts"/></svg></span></li>
        <li class="lay"><i class="cell"></i><i class="cell"></i><span class="nm"><svg class="th"><use href="#gridl"/></svg><em class="pad">グリッドレイヤー</em><svg class="op"><use href="#opts"/></svg></span></li>
      </ul>
      <div class="vbar flat"><button class="up"></button><button class="down"></button></div>
    </div>
    <div class="foot"><span>ラスターレイヤー 600 dpi(黒白(2bit))下描き設定</span><div class="grip"></div></div>
  </div>
</section>

<section class="palette tools">
  <header><button class="close" aria-label="閉じる"></button></header>
  <div class="client">
    <div class="trow">
      <button class="c"><svg><use href="#marq"/></svg></button><button class="c"><svg><use href="#lasso"/></svg></button><button class="c"><svg><use href="#wand"/></svg></button><button><svg><use href="#shp"/></svg></button><button><svg><use href="#lays"/></svg></button><button><svg><use href="#eyed"/></svg></button><button class="c"><svg><use href="#slice"/></svg></button><button><svg><use href="#move"/></svg></button><button><svg><use href="#persp"/></svg></button><button><svg><use href="#cubec"/></svg></button>
    </div>
    <div class="trow line">
      <button class="c on"><svg><use href="#pen"/></svg></button><button class="c"><svg><use href="#pencil"/></svg></button><button class="c"><svg><use href="#mark"/></svg></button><button class="c"><svg><use href="#erase"/></svg></button><button class="c"><svg><use href="#brush"/></svg></button><button class="c"><svg><use href="#pbrush"/></svg></button><button class="c"><svg><use href="#fill"/></svg></button><button class="c"><svg><use href="#fill2"/></svg></button><button class="c"><svg><use href="#grad"/></svg></button><button class="txt">A</button><button class="c"><svg><use href="#line"/></svg></button><button class="c"><svg><use href="#rect"/></svg></button>
    </div>
    <div class="trow line last">
      <button class="c"><svg><use href="#join"/></svg></button><button class="c"><svg><use href="#plines"/></svg></button><button class="c"><svg><use href="#pline"/></svg></button><button class="c"><svg><use href="#stamp"/></svg></button>
      <i class="bar"></i>
      <button class="c"><svg><use href="#hand"/></svg></button><button><svg><use href="#zoomi"/></svg></button>
      <i class="bar tall"></i>
      <button class="ink cur" aria-label="黒"></button><button class="ink white" aria-label="白"></button><button class="ink trans" aria-label="透明"></button><div class="mix"></div>
    </div>
  </div>
</section>

<section class="palette props">
  <header><h2>プロパティ</h2><button class="close" aria-label="閉じる"></button></header>
  <div class="client">
    <div class="ptabs">
      <svg class="tabline" aria-hidden="true"><path d="M2 17.500h150l15-16h48v16M7.500 17V1.500h58l6 7M71.500 17V1.500h31l15 16M215 8l7-6.500h31.500v16M215 17.500h43" fill="none" stroke="#777"/></svg>
      <button>選択範囲</button><button>素材</button><button class="cur">レイヤー</button><button>定規</button>
    </div>
    <div class="form">
      <div class="row"><span class="lb">種類:</span><span class="in">ラスターレイヤー</span><svg class="lk"><use href="#unlock"/></svg></div>
      <div class="row"><label class="lb" for="lname">レイヤー名:</label><input id="lname" class="in grow" value="縁取り"></div>
      <div class="row"><label class="lb" for="expr">表現色:</label><input id="expr" class="in w70" value="黒白(2bit)" readonly><label class="rt" for="res">解像度:</label><input id="res" class="w58" value="600.0 dpi" readonly></div>
      <div class="row"><label class="lb" for="opa">不透明度:</label><input id="opa" class="in w70" value="100 %"><button class="arr"></button></div>
      <div class="row"><span class="lb">表示色:</span><label class="opt in w110"><input type="radio" name="disp">グレースケール</label><label class="opt"><input type="radio" name="disp" checked>カラー</label></div>
      <div class="row"><span class="lb"></span><i class="swatch black"></i><span>黒色の代替色</span></div>
      <div class="row"><span class="lb"></span><i class="swatch white"></i><span>白色の代替色</span></div>
      <div class="row"><span class="lb">パレット色:</span><i class="swatch silver"></i></div>
      <div class="row"><label class="lb" for="tone">トーン領域:</label><input type="checkbox" id="tone" disabled><i class="swatch none"></i><label class="rt" for="topa">不透明度:</label><input id="topa" class="w42" value="70 %" disabled><button class="arr gray wide"></button></div>
      <div class="row"><span class="lb">出力属性:</span><label class="opt w73"><input type="radio" name="out" checked>下描き</label><label class="opt"><input type="radio" name="out">仕上げ</label></div>
      <div class="row"><span class="lb">サブ定規:</span><label class="opt w100"><input type="checkbox">レイヤー化</label><label class="opt"><input type="checkbox">表示しない</label></div>
      <div class="row"><label class="lb" for="red">減色手法:</label><select id="red" disabled><option>減色しない</option></select><label class="rt" for="thr">閾値:</label><input id="thr" class="w35" value="127" disabled><button class="arr gray wide"></button></div>
      <svg class="swap"><use href="#swap"/></svg>
      <svg class="scribble" viewBox="430 95 390 210" aria-hidden="true"><path d="M785 285C690 298 580 296 500 255C460 225 466 180 505 152C560 120 680 112 735 145C790 175 795 240 740 265C715 274 695 268 675 268M440 198C480 140 560 105 655 103C740 103 806 150 807 195C808 240 760 280 700 292C600 302 500 262 440 200" fill="none" stroke="#e02030" stroke-width="3"/></svg>
    </div>
    <div class="pfoot"><button class="push">簡易表示</button></div>
  </div>
</section>

<section class="palette pen">
  <header><h2>ペン ツールオプション</h2><button class="close" aria-label="閉じる"></button></header>
  <div class="client">
    <div class="gname"><svg class="i18"><use href="#pen"/></svg><button>G</button><svg class="i16"><use href="#menu"/></svg></div>
    <svg class="stroke" viewBox="0 0 206 52"><path d="M12 32C45 15 80 18 105 24S155 37 194 19" fill="none" stroke="#000" stroke-width="5" stroke-linecap="round"/></svg>
    <div class="ntabs">
      <svg class="tabline" aria-hidden="true"><path d="M2 16.500h19.500V1.500h30l15 15H214M58.500 9V1.500h46l7 7M111.500 16V1.500h31l15 15" fill="none" stroke="#777"/></svg>
      <i class="tri dk"></i><button class="cur">一般</button><button>ベクター</button><button>形状</button>
    </div>
    <div class="nbody">
      <div class="nrows">
        <div class="nrow"><i class="led"></i><label for="sz">サイズ:</label><input id="sz" value="0.80 mm"><button class="arr"></button></div>
        <div class="nrow far"><label class="wide" for="po">不透明度:</label><input id="po" value="100 %"><button class="arr"></button></div>
        <div class="nrow"><input type="checkbox" id="c1"><label for="c1">入り:</label><input value="5.00 mm" aria-label="入り"><button class="arr"></button></div>
        <div class="nrow"><input type="checkbox" id="c2"><label for="c2">抜き:</label><input value="5.00 mm" aria-label="抜き"><button class="arr"></button></div>
        <div class="nrow"><input type="checkbox" id="c3" checked><label for="c3">補正:</label><input value="5.0" aria-label="補正"><button class="arr"></button></div>
      </div>
      <div class="nside">
        <div class="dotbox"></div>
        <div class="nicons"><button class="span"><svg><use href="#press"/></svg></button><button><svg><use href="#pcur"/></svg></button><button><svg><use href="#bend"/></svg></button><button><svg><use href="#stab"/></svg></button><button class="on"><svg><use href="#stabz"/></svg></button></div>
      </div>
    </div>
  </div>
</section>
<script src="ruler.js"></script>
</body>
</html>
```
FILE: ruler.js
```js
// Draws millimetre rulers: a tick every 5 mm, a longer one at 25, a full one with its label at 50.
const SCALE = 2.953;
const LABEL_ROOM = 28;
const NS = 'http://www.w3.org/2000/svg';

function add(svg, name, attrs, text) {
  const el = document.createElementNS(NS, name);
  for (const key in attrs) el.setAttribute(key, attrs[key]);
  if (text !== undefined) el.textContent = text;
  svg.appendChild(el);
}

function drawRuler(id, origin, from, vertical) {
  const svg = document.getElementById(id);
  const box = svg.getBoundingClientRect();
  const length = vertical ? box.height : box.width;
  for (let mm = from; origin + mm * SCALE < length; mm += 5) {
    const p = Math.round(origin + mm * SCALE) + 0.5;
    const start = mm % 50 === 0 ? 0 : mm % 25 === 0 ? 14 : 18;
    add(svg, 'line', vertical
      ? { x1: start, x2: 22, y1: p, y2: p }
      : { x1: p, x2: p, y1: start, y2: 22 });
    if (mm % 50 === 0 && p + LABEL_ROOM < length) {
      add(svg, 'text', vertical
        ? { x: 10, y: p + 12, 'text-anchor': 'middle' }
        : { x: p + 3, y: 13 }, String(mm));
    }
  }
}

drawRuler('hruler', 520, -175, false);
drawRuler('vruler', 6, 0, true);
```
FILE: styles.css
```css
* { box-sizing: border-box; }
html, body { margin: 0; height: 100%; }
body {
  position: relative;
  overflow: hidden;
  font: 12px/14px "Liberation Sans", "Noto Sans CJK JP", sans-serif;
  color: #000;
  background: #f0f0f0;
}
button, input, select, textarea { font: inherit; color: inherit; margin: 0; padding: 0; border-radius: 0; }
button { background: none; border: 0; white-space: nowrap; }
h2, dl, dt, ul, li { margin: 0; padding: 0; font-weight: normal; }
i, em { font-style: normal; }
.defs { position: absolute; width: 0; height: 0; }
svg { display: block; flex: none; }

.frame { min-height: 100vh; display: flex; padding: 0 5px 3px 0; background: linear-gradient(#dfe9f6, #c4d8f0 20%, #b8cfe8); }
.app { flex: 1; display: flex; flex-direction: column; min-width: 0; background: #f0f0f0; border-right: 2px solid #6a707a; border-bottom: 1px solid #6a707a; }

/* menu bar */
.menubar { display: flex; align-items: center; height: 19px; background: linear-gradient(#fff, #eef1f9 35%, #d5dbee 40%, #dfe4f3); border-bottom: 1px solid #b4b8c8; }
.appicon { width: 16px; height: 16px; margin: 0 8px 0 6px; }
.menus { display: flex; gap: 16px; flex: 1; }
.winbtns { display: flex; gap: 2px; }
.winbtns button { width: 18px; height: 18px; background: #dceaf8; border: 1px solid #98a8b8; }
.winbtns svg { width: 16px; height: 16px; }

/* toolbars */
.toolbar { display: flex; align-items: center; }
.toolbar .tb { display: grid; place-items: center; flex: none; width: 20px; height: 20px; }
.toolbar .tb svg { width: 16px; height: 16px; }
.toolbar .tb.on { border: 1px solid #555; border-radius: 3px; background: #dcdcdc; box-shadow: inset 1px 1px 2px #888; }
.toolbar .tb.dim { opacity: .4; }
.main { height: 28px; padding-left: 8px; border-left: 0; border-bottom: 1px solid #666; }
.main::before { content: ""; width: 1px; height: 20px; margin-left: -4px; margin-right: 4px; background: #aaa; }
.main .tb { width: 24px; height: 20px; }
.sep { flex: none; width: 1px; height: 20px; margin: 0 3px; background: #999; }
.sep.wide { margin: 0 4px 0 5px; }
.clip { width: 41px; height: 20px; padding: 1px; background: #fff; border: 1px solid #ccc; border-radius: 3px; }
.clip svg { width: 37px; height: 16px; }
.arr { flex: none; width: 12px; height: 18px; display: grid; place-items: center; }
.arr::before { content: ""; border-left: 5px solid #000; border-top: 4px solid transparent; border-bottom: 4px solid transparent; }
.arr.gray::before { border-left-color: #999; }
.num { width: 40px; height: 18px; padding: 0 2px; border: 1px solid #d0d4e0; background: #fff; }
.num:disabled { background: #eee; border-color: #bbb; }

.workspace { flex: 1; display: flex; min-height: 0; }

/* left side */
.side { width: 215px; flex: none; display: flex; flex-direction: column; margin-right: 12px; }
.sidetabs { position: relative; display: flex; align-items: center; height: 24px; padding-left: 11px; }
.tabline { position: absolute; inset: 0; width: 100%; height: 100%; }
.sidetabs button { position: relative; }
.sidetabs .cur { margin-left: 19px; font-weight: bold; font-feature-settings: "palt"; }
.sidetabs .x { margin-left: 8px; }
.sidetabs .x svg { width: 8px; height: 8px; }
.sub { height: 22px; padding-left: 2px; }
.sub .spaced { margin: 0 9px 0 7px; }
.sub .hand { margin: 0 3px 0 -2px; }
.sub .sep.wide { margin: 0 4px; }
.listwrap { display: flex; height: 497px; border-left: 2px solid #777; border-top: 1px solid #777; }
.pages { width: 195px; padding: 7px 0 0 12px; overflow: hidden; background: #ababab; display: flex; flex-direction: column; gap: 11px; }
.spread { width: 170px; height: 126px; flex: none; padding: 1px 0 0 5px; background: #f0f0f0; border: 1px solid #fff; border-right-color: #999; border-bottom-color: #999; box-shadow: 6px 6px #696969; }
.leaf { width: 77px; height: 124px; padding-top: 5px; text-align: center; }
.leaf svg { width: 73px; height: 104px; margin: 0 1px; }
.leaf.sel { color: #fff; background: #3a3a3a; }
.leaf.wide { width: 150px; }
.leaf.wide svg { width: 140px; }
.leaf.wide span { display: block; width: 73px; }
.vbar { display: flex; flex-direction: column; align-items: center; width: 17px; background: #ececec; border-left: 1px solid #fff; }
.vbar button, .hbar button { display: grid; place-items: center; flex: none; width: 16px; height: 16px; }
.up::before { content: ""; border: 4px solid transparent; border-top: 0; border-bottom-color: #444; }
.down::before { content: ""; border: 4px solid transparent; border-bottom: 0; border-top-color: #444; }
.left::before { content: ""; border: 4px solid transparent; border-left: 0; border-right-color: #444; }
.right::before { content: ""; border: 4px solid transparent; border-right: 0; border-left-color: #444; }
.vbar .down { margin-top: auto; }
.vbar.flat { background: #f0f0f0; border-right: 1px solid #e4e4e4; }
.flat button { opacity: .6; }
.hbar { display: flex; align-items: center; height: 18px; background: #ececec; border-top: 1px solid #fff; }
.side > .hbar { height: 22px; }
.info { flex: 1; display: flex; flex-direction: column; margin-bottom: 3px; padding: 8px 11px 10px; border: solid #777; border-width: 1px 1px 1px 2px; font-feature-settings: "palt"; }
.info dl { width: 76px; text-align: right; white-space: nowrap; }
.info dt { height: 20px; line-height: 20px; }
.memohead { display: flex; align-items: center; gap: 5px; height: 22px; margin-top: 3px; }
.push { height: 18px; padding: 0 12px; border: 1px solid #777; border-radius: 3px; background: linear-gradient(#f4f4f4, #ddd 50%, #ccc); }
.memo { flex: 1; display: flex; border: 1px solid #999; border-right-color: #fff; border-bottom-color: #fff; }
.memo textarea { flex: 1; width: 100px; border: 0; resize: none; outline: 0; background: none; line-height: 12px; overflow: hidden; font-feature-settings: "palt"; }

/* document */
.doc { flex: 1; min-width: 0; display: flex; flex-direction: column; margin-bottom: 3px; border-right: 1px solid #666; border-bottom: 1px solid #666; }
.view { height: 24px; border-bottom: 1px solid #666; }
.view .num { margin: 0 0 0 3px; }
.view-grid { flex: 1; display: grid; grid-template-columns: 22px 1fr 17px; grid-template-rows: 22px 1fr 18px; border-left: 1px solid #666; }
.view-grid > .vbar { grid-area: 1 / 3 / 3 / 4; }
.corner, .hruler, .vruler { background: #fff; }
.corner { border-right: 1px solid #000; border-bottom: 1px solid #000; }
.hruler { width: 100%; height: 22px; border-bottom: 1px solid #000; overflow: hidden; }
.vruler { width: 22px; height: 100%; border-right: 1px solid #000; overflow: hidden; }
.hruler line, .vruler line { stroke: #000; }
.canvas { position: relative; overflow: hidden; background: #c8c8c8; }
.paper { position: absolute; inset: 0; width: 100%; height: 100%; }
.pg { font: bold 8px "Liberation Serif", "Noto Sans CJK JP", serif; fill: #222; }
.view-grid > .hbar { grid-column: 1 / 3; }
.hbar .track { flex: 366; }
.hbar .track.end { flex: 380; }
.hbar .thumb, .vbar .thumb { position: relative; border: 1px solid #999; border-radius: 2px; }
.hbar .thumb { flex: 860; height: 15px; background: linear-gradient(#f4f4f4, #e0e0e0 45%, #c8c8ca 50%, #d0d0d0); }
.vbar .thumb { width: 15px; height: 334px; margin-top: 253px; background: linear-gradient(90deg, #f0f0f0, #dcdcdc 45%, #c4c4c6 50%, #ccc); }
.thumb::before { content: ""; position: absolute; left: calc(50% - 4px); top: calc(50% - 4px); width: 8px; height: 7px; background: repeating-linear-gradient(90deg, #555 0 1px, #eee 1px 3px); }
.vbar .thumb::before { background: repeating-linear-gradient(#555 0 1px, #eee 1px 3px); }
.grip { align-self: end; justify-self: end; width: 11px; height: 11px; background: radial-gradient(#aaa 1px, transparent 1px) 0 0 / 4px 4px; clip-path: polygon(100% 0, 100% 100%, 0 100%); }
.dock { width: 18px; display: grid; place-items: center; border-left: 2px solid #fff; border-bottom: 1px solid #666; }
.dock button { border: 7px solid transparent; border-left: 0; border-right-color: #000; }

.status { display: flex; align-items: center; height: 24px; border: 2px solid #fff; border-top: 1px solid #888; background: #f0ecec; }
.status span { flex: 1; margin-left: 126px; padding-left: 4px; border-left: 1px solid #ccc; font-size: 13px; line-height: 20px; }

/* floating palettes */
.palette { position: absolute; display: flex; flex-direction: column; padding: 0 5px 5px; border: 1px solid #1c2430; border-radius: 2px; background: linear-gradient(#ccd8e6, #c6d4e2 20%, #b4c8dc 50%, #a8bccf); box-shadow: inset 0 0 0 1px #e4eef8, 1px 2px 14px 2px rgba(0, 0, 0, .8); font-feature-settings: "palt"; }
.palette input, .palette select, .palette button { font-feature-settings: "palt"; }
.palette > header { display: flex; align-items: center; height: 26px; flex: none; }
.palette h2 { flex: 1; font-size: 12px; line-height: 18px; padding-left: 2px; }
.close { width: 20px; height: 20px; margin-left: auto; border: 1px solid #643838; border-radius: 2px; background: linear-gradient(#eeb0a0, #dc7c68 48%, #c44028 52%, #d86c50); box-shadow: inset 0 0 0 1px #f0b8a8; color: #fff; display: grid; place-items: center; }
.close::before { content: "✕"; font: bold 10px/10px "DejaVu Sans", sans-serif; text-shadow: 0 0 1px #000, 0 0 1px #000; }
.client { flex: 1; border: 1px solid #000; background: #f0f0f0; }
.tri { flex: none; border: 5px solid transparent; border-bottom: 0; border-top-color: #999; }
.tri.dk { border-top-color: #666; }

.layers { left: 72px; top: 234px; width: 277px; height: 597px; }
.layers .client { display: flex; flex-direction: column; padding: 2px 2px 0; min-height: 0; }
.lt { height: 24px; padding-left: 1px; border-bottom: 1px solid #999; flex: none; }
.lt .num { width: 42px; margin: 0 2px 0 1px; }
.lt .tb { width: 22px; }
.lt .tb.on { width: 20px; }
.layerbox { flex: 1; display: flex; justify-content: space-between; margin-top: 4px; border-left: 1px solid #bbb; }
.layerlist { width: 242px; list-style: none; }
.layerlist li { display: flex; align-items: center; border: 1px solid #666; border-top: 0; }
.layerlist li:first-child { border-top: 1px solid #666; }
.grp { height: 14px; background: #e0e0e0; line-height: 13px; padding-left: 3px; }
.grp.b { font-weight: bold; }
.grp svg { width: 11px; height: 11px; margin: 0 0 0 4px; }
.grp svg.marks { width: 52px; margin-left: 16px; }
.lay { height: 21px; background: #b4b4b4; }
.cell { width: 17px; height: 17px; margin-left: 2px; border: 1px solid #777; border-right-color: #fff; border-bottom-color: #fff; background: #bfbfbf; }
.cell svg { width: 15px; height: 15px; }
.nm { flex: 1; display: flex; align-items: center; height: 20px; margin-left: 3px; padding-left: 1px; border-left: 1px solid #666; background: #fff; }
.nm em { flex: 1; padding-left: 4px; line-height: 18px; }
.nm em.pad { padding-left: 6px; }
.sel .nm { background: #9494ff; font-weight: bold; }
.th { width: 18px; height: 18px; background: #f4f4f4; border: 1px solid #ccc; }
.sw { width: 17px; height: 17px; margin-left: 1px; }
.op { width: 11px; height: 11px; }
.foot { display: flex; height: 20px; font-size: 11px; line-height: 20px; }
.foot span { flex: 1; }

.tools { right: 46px; top: 31px; width: 330px; min-height: 154px; background: linear-gradient(#dce9f4, #c4d8ea 10%, #e4eef6 30%, #dce8f2 55%, #b0c4d8); }
.tools .client { padding: 1px 4px 1px 3px; }
.trow { display: flex; align-items: center; height: 30px; }
.trow.line { border-top: 1px solid #999; height: 30px; }
.trow button { position: relative; width: 26px; height: 24px; flex: none; display: grid; place-items: center; }
.trow .on { width: 24px; margin-right: 2px; border: 1px solid #555; border-radius: 3px; background: #dedede; box-shadow: inset 1px 1px 2px #888; }
.trow button svg { width: 20px; height: 20px; }
.trow button.c::after { content: ""; position: absolute; right: 2px; bottom: 2px; border: 2px solid #000; border-top-color: transparent; border-left-color: transparent; }
.trow .txt { font: 24px/24px "Liberation Serif", serif; }
.trow.last { align-items: flex-start; height: 57px; padding-top: 3px; }
.bar { width: 1px; height: 24px; margin: 0 2px; background: #999; }
.bar.tall { height: 51px; margin: 0 5px 0 3px; }
.trow .ink { width: 16px; height: 24px; margin-right: 1px; border: 1px solid #555; }
.trow .ink.cur { border: 2px solid #f00; background: #666; }
.trow .white { background: #fff; }
.trow .trans { background: repeating-conic-gradient(#ccc 0 25%, #fff 0 50%) 0 0 / 8px 8px; }
.mix { width: 50px; height: 36px; border: 1px solid #999; }

.props { right: 43px; top: 186px; width: 273px; }
.ptabs, .ntabs { position: relative; display: flex; align-items: center; }
.ptabs button, .ntabs button { position: relative; }
.cur { font-weight: bold; }
.ptabs { height: 18px; margin-top: 2px; padding-left: 13px; padding-top: 2px; gap: 14px; }
.ptabs .cur { margin-left: auto; }
.ptabs button:last-child { margin-right: 12px; }
.form { position: relative; display: grid; grid-template-rows: 22px 20px 24px 24px 22px 20px 28px 32px 24px 30px 20px 28px; margin-top: 1px; padding-right: 5px; }
.row { display: flex; align-items: center; white-space: nowrap; }
.lb { width: 68px; margin-right: 3px; text-align: right; flex: none; }
.in { margin-left: 4px; }
.lk { width: 16px; height: 16px; margin-left: auto; }
.grow { flex: 1; width: 100px; }
.form input:not([type]), .form select, .nrow input:not([type]) { height: 18px; padding: 0 2px; border: 1px solid #d4d8e4; background: #fff; }
.form input[readonly]:not([type]) { background: #f0f0f0; }
.form input:disabled:not([type]) { background: #f0f0f0; border-color: #bbb; color: #777; }
.form select { width: 89px; height: 20px; background: #f0f0f0; color: #999; border-color: #aaa; opacity: 1; }
.w35 { width: 35px; }
.w42 { width: 42px; }
.w58 { width: 58px; }
.w70 { width: 70px; }
.w73 { width: 75px; }
.w100 { width: 100px; }
.w110 { width: 110px; }
.rt { margin: 0 5px 0 auto; }
.arr.wide { width: 20px; }
.opt { display: flex; align-items: center; gap: 3px; }
input[type=checkbox], input[type=radio] { appearance: none; flex: none; width: 13px; height: 13px; border: 1px solid #888; background: linear-gradient(135deg, #ccd0d4, #fff); box-shadow: inset 0 0 0 1px #f4f4f4; display: grid; place-items: center; }
input[type=checkbox]:disabled { border-color: #bbb; background: #f4f4f4; }
input[type=checkbox]:checked::before { content: "✔"; font: bold 11px/11px "DejaVu Sans", sans-serif; color: #2c4c98; }
input[type=radio] { border-radius: 50%; }
input[type=radio]:checked::before { content: ""; width: 7px; height: 7px; border-radius: 50%; background: radial-gradient(circle at 35% 35%, #60c8f0, #0c3c70 70%); }
.swatch { width: 36px; height: 15px; margin: 0 6px 0 19px; border: 1px solid #999; }
input + .swatch { margin-left: 6px; }
.swatch.black { background: #666; }
.swatch.white { background: #fff; }
.swatch.silver { background: #bfbfbf; }
.swap { position: absolute; left: 75px; top: 126px; width: 10px; height: 16px; }
.scribble { position: absolute; left: 134px; top: 168px; width: 130px; height: 70px; pointer-events: none; }
.pfoot { display: flex; justify-content: center; align-items: center; height: 33px; margin: 1px 6px 0; border-top: 1px solid #999; }
.pfoot .push { width: 75px; height: 20px; margin-bottom: 2px; }

.pen { right: 43px; top: 568px; width: 228px; }
.pen > header { height: 27px; }
.pen .client { padding: 0 4px 4px; }
.gname { display: flex; align-items: center; justify-content: space-between; height: 33px; padding: 0 4px; }
.gname button { width: 152px; height: 20px; border: 1px solid #666; }
.i18 { width: 18px; height: 18px; }
.i16 { width: 16px; height: 16px; }
.stroke { width: 206px; height: 52px; background: #fff; border: 1px solid #666; }
.ntabs { height: 18px; margin: 8px -4px 0; padding: 1px 0 0 6px; }
.ntabs .tri { margin-right: 8px; }
.ntabs button { margin-right: 12px; }
.nbody { display: flex; justify-content: space-between; margin-top: 2px; }
.nrow { display: flex; align-items: center; height: 23px; width: 148px; padding-left: 8px; white-space: nowrap; }
.nrow:first-child { height: 22px; }
.nrow.far { margin-bottom: 9px; }
.nrow label { flex: 1; padding-left: 3px; }
.nrow label.wide { padding-left: 12px; }
.nrow input:not([type]) { width: 54px; flex: none; }
.nrow .arr { width: 17px; margin-left: 1px; }
.led { width: 15px; height: 15px; margin-left: -3px; border: 1px solid #333; border-radius: 50%; background: radial-gradient(circle at 50% 20%, #a8f0a8, #10a030 50%, #087020); }
.nside { width: 52px; padding-top: 2px; }
.dotbox { height: 52px; border: 1px solid #555; background: radial-gradient(#000 1px, #fff 1px); }
.nicons { display: grid; grid-template-columns: 26px 26px; grid-template-rows: 22px 22px 26px; }
.nicons button { display: grid; place-items: center; }
.nicons svg { width: 16px; height: 16px; }
.nicons .span { grid-row: span 2; }
.nicons .on { width: 21px; height: 20px; place-self: center; border: 1px solid #555; border-radius: 3px; background: #ddd; }
```
